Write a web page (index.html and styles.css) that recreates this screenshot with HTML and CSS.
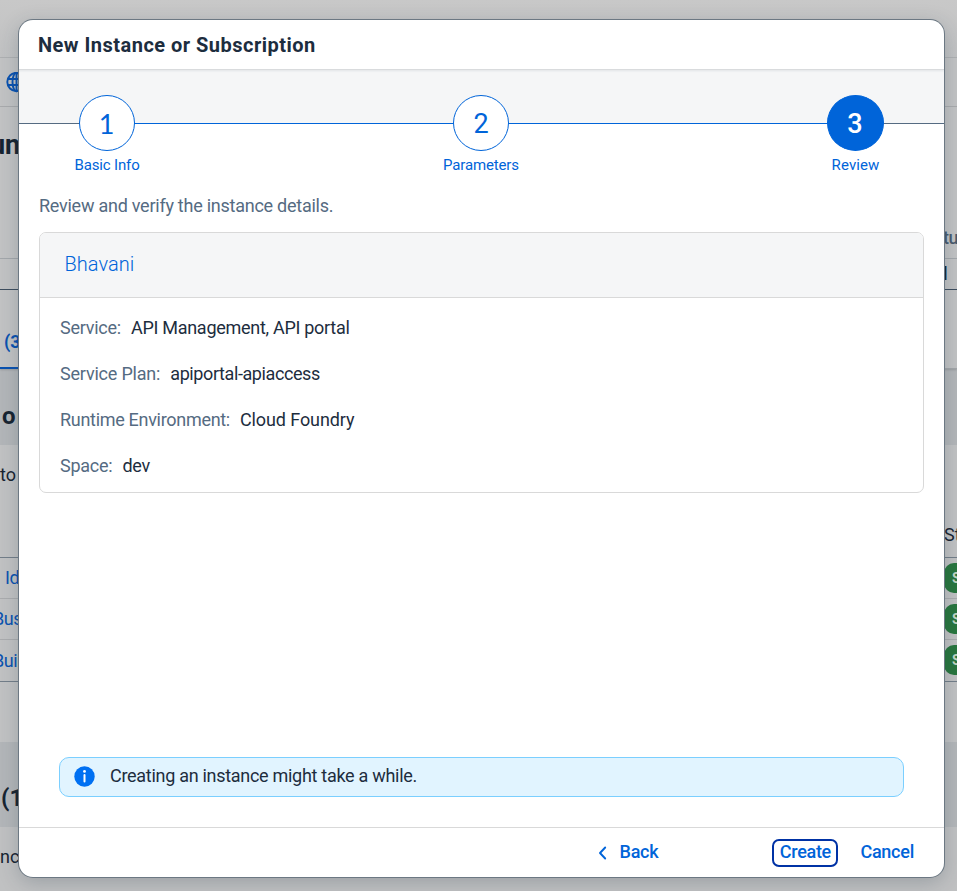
FILE: index.html
```html
<!DOCTYPE html>
<html lang="en">
<head>
<meta charset="utf-8">
<title>New Instance or Subscription</title>
<link rel="stylesheet" href="styles.css">
</head>
<body>
<div class="page">
  <div class="band shell"></div>
  <div class="band crumbs">
    <svg class="globe" width="21" height="21" viewBox="0 0 21 21" fill="none" stroke="#0a52b0" stroke-width="1.9"><circle cx="10.500" cy="10" r="9.200"/><ellipse cx="10.500" cy="10" rx="4" ry="9.200"/><path d="M10.500 1v18M2 7h17M2 13h17"/></svg>
  </div>
  <div class="band title"><span class="heading cut-title">un</span><span class="status">tu</span></div>
  <div class="band filter"><span class="dark">l</span></div>
  <div class="band tabs"><span class="tab">(3</span></div>
  <div class="band section first"><span class="heading">or</span></div>
  <div class="band intro"><span>to</span></div>
  <div class="band columns"><span>St</span></div>
  <div class="band row"><a class="id">Id</a><b class="pill">S</b></div>
  <div class="band row"><a>Bus</a><b class="pill">S</b></div>
  <div class="band row last"><a>Buil</a><b class="pill">S</b></div>
  <div class="band gap"></div>
  <div class="band section second"><span class="heading">(1</span></div>
  <div class="band ending"><span>nc</span></div>
</div>

<div class="dialog">
  <header class="dialog-head"><h1>New Instance or Subscription</h1></header>
  <nav class="steps">
    <div class="step"><span class="dot one">1</span><span class="label basic">Basic Info</span></div>
    <div class="step"><span class="dot">2</span><span class="label params">Parameters</span></div>
    <div class="step"><span class="dot on">3</span><span class="label review">Review</span></div>
  </nav>
  <main class="content">
    <p class="lead">Review and verify the instance details.</p>
    <section class="card">
      <div class="card-head">Bhavani</div>
      <dl>
        <div><dt>Service:</dt><dd class="v1">API Management, API portal</dd></div>
        <div><dt class="k2">Service Plan:</dt><dd class="v2">apiportal-apiaccess</dd></div>
        <div><dt class="k3">Runtime Environment:</dt><dd class="v3">Cloud Foundry</dd></div>
        <div><dt>Space:</dt><dd>dev</dd></div>
      </dl>
    </section>
    <div class="notice">
      <svg width="21" height="21" viewBox="0 0 21 21"><circle cx="10.500" cy="10.500" r="10.200" fill="#0070f2"/><circle cx="10.500" cy="5.400" r="1.400" fill="#fff"/><rect x="9.500" y="8" width="2" height="8.500" rx="1" fill="#fff"/></svg>
      <span>Creating an instance might take a while.</span>
    </div>
  </main>
  <footer class="actions">
    <button class="back"><svg width="9" height="14" viewBox="0 0 9 14" fill="none" stroke="#0064d9" stroke-width="1.900" stroke-linecap="round" stroke-linejoin="round"><path d="M7.200 1.500L2 7l5.200 5.500"/></svg>Back</button>
    <button class="create">Create</button>
    <button class="cancel">Cancel</button>
  </footer>
</div>
</body>
</html>
```

FILE: styles.css
```css
* { box-sizing: border-box; }
body { margin: 0; height: 891px; overflow: hidden; font-family: Roboto, "Liberation Sans", sans-serif; font-size: 18px; color: #1d2d3e; position: relative; }

/* Dimmed page behind the dialog */
.page { width: 957px; height: 891px; background: #c2c3c4; overflow: hidden; }
.band { display: flex; width: 957px; line-height: 24px; color: #172431; white-space: nowrap; }
.heading { font-weight: 700; font-size: 24px; }
.shell { height: 58px; background: linear-gradient(#c8c8c8, #c1c2c3); border-bottom: 1px solid #aeb0b2; }
.crumbs { height: 49px; border-bottom: 1px solid #a9abad; padding: 14px 0 0 6px; }
.title { height: 152px; border-bottom: 1px solid #a3a7ab; padding-top: 26px; justify-content: space-between; }
.cut-title { line-height: 24px; margin-left: -10px; font-size: 27px; }
.status { margin-top: 93px; width: 14px; color: #4a5b6e; font-weight: 500; letter-spacing: -.5px; }
.filter { height: 31px; border-bottom: 1px solid #3f4f60; justify-content: flex-end; padding-top: 3px; }
.filter .dark { width: 14px; font-weight: 500; }
.tabs { height: 79px; border-bottom: 1px solid #a3a6a9; box-shadow: 0 1px 2px rgba(0,0,0,.15); position: relative; }
.tab { width: 80px; height: 79px; padding: 40px 0 0 4px; font-weight: 700; color: #0a52b0; border-bottom: 2px solid #0a52b0; }
.section { background: #b3b6b9; }
.first { height: 76px; padding: 35px 0 0 1px; }
.first .heading { letter-spacing: 1.5px; padding-left: 1px; }
.intro { height: 74px; padding-top: 18px; background: #c1c2c3; }
.columns { height: 39px; padding-top: 4px; justify-content: flex-end; background: #c1c2c3; border-bottom: 1px solid #737e89; }
.columns span { width: 13px; }
.row { height: 41px; align-items: center; justify-content: space-between; background: #c1c2c3; border-bottom: 1px solid #aaacae; }
.row a { color: #0a52b0; margin-left: -7px; letter-spacing: -.5px; }
.row .id { margin-left: 5px; }
.row.last { height: 42px; border-color: #737e89; }
.pill { width: 60px; height: 30px; margin: -1px -47px 0 0; padding-left: 8px; line-height: 30px; border-radius: 10px; background: #28763e; color: #c4d8c9; font-size: 14px; }
.gap { height: 60px; background: #c1c2c3; }
.second { height: 85px; padding: 44px 0 0 1px; }
.ending { padding-top: 18px; height: 64px; background: #c0c1c2; }

/* Dialog */
.dialog { position: absolute; left: 19px; top: 20px; width: 925px; height: 857px; display: flex; flex-direction: column; background: #fff; border-radius: 14px; overflow: hidden; box-shadow: 0 0 0 1px #6c7883, 0 5px 20px rgba(34,54,73,.25); }
.dialog-head { height: 50px; flex: none; border-bottom: 1px solid #d9dbdd; padding: 0 19px; box-shadow: 0 1px 2px rgba(34,54,73,.09); position: relative; }
h1 { margin: 0; font-size: 20px; line-height: 51px; font-weight: 700; letter-spacing: .48px; }
.steps { height: 105px; flex: none; display: flex; justify-content: space-between; padding: 25px 29px 0 28px; background: linear-gradient(90deg, #556b82 60px, #0064d9 60px, #0064d9 865px, #556b82 865px) 0 53px / 100% 1px no-repeat, linear-gradient(#f5f6f7, #f5f6f7) 0 0 / 100% 53px no-repeat; }
.step { width: 120px; display: flex; flex-direction: column; align-items: center; color: #0064d9; }
.dot { width: 56px; height: 56px; border: 1px solid #0064d9; border-radius: 50%; background: #fff; font-size: 27px; line-height: 57px; text-align: center; }
.dot.one { font-family: Lato, Roboto, sans-serif; line-height: 55px; padding-right: 1px; }
.dot.on { width: 57px; background: #0064d9; color: #fff; font-weight: 500; }
.label { font-size: 15px; line-height: 20px; margin-top: 4px; letter-spacing: -.15px; }
.review { padding-left: 1px; letter-spacing: .1px; }
.content { flex: 1; display: flex; flex-direction: column; padding: 0 20px; }
.lead { margin: 0; height: 57px; padding-top: 19px; line-height: 24px; color: #556b82; letter-spacing: -.25px; }
.card { border: 1px solid #d9d9d9; border-radius: 7px; overflow: hidden; height: 261px; }
.card-head { height: 65px; line-height: 63px; padding-left: 24.5px; background: #f5f6f7; border-bottom: 1px solid #d9d9d9; font-size: 20px; font-weight: 300; color: #0064d9; letter-spacing: .05px; }
dl { margin: 0; padding: 7px 20px; }
dl div { display: flex; gap: 10px; height: 46px; line-height: 46px; letter-spacing: -.25px; }
dt { color: #556b82; }
dd { margin: 0; }
.v1 { letter-spacing: -.28px; }
.k2 { letter-spacing: -.2px; }
.v2 { letter-spacing: -.4px; }
.k3 { letter-spacing: -.3px; }
.v3 { letter-spacing: -.1px; }
.notice { display: flex; align-items: center; gap: 15px; height: 40px; margin: auto 20px 30px; padding: 0 14px 2px; background: #e1f4ff; border: 1px solid #7bcfff; border-radius: 10px; letter-spacing: -.29px; }
.notice span { padding-bottom: 2px; }
.actions { height: 50px; flex: none; display: flex; align-items: center; justify-content: flex-end; border-top: 1px solid #d9d9d9; }
button { font: 500 18px/22px Roboto, "Liberation Sans", sans-serif; color: #0064d9; background: none; border: 0; padding: 0 0 2px; letter-spacing: -.25px; }
.back { display: flex; align-items: center; gap: 13px; margin-right: 114px; }
.back svg { position: relative; top: 1px; }
.create { width: 66px; height: 28px; border: 2px solid #0032a5; border-radius: 7px; letter-spacing: -.3px; }
.cancel { margin: 0 30px 0 22px; }
```
